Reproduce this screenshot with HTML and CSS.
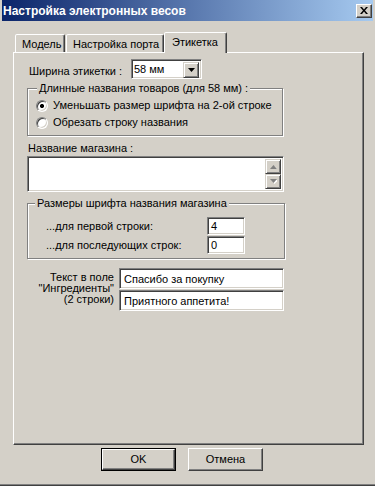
FILE: index.html
```html
<!DOCTYPE html>
<html lang="ru">
<head>
<meta charset="utf-8">
<title>Настройка электронных весов</title>
<link rel="stylesheet" href="styles.css">
</head>
<body>
<div class="window">
  <div class="titlebar">
    <span class="title">Настройка электронных весов</span>
    <span class="close"><svg width="8" height="7" viewBox="0 0 8 7"><path d="M0 0h2l2 2.5L6 0h2L5 3.5 8 7H6L4 4.5 2 7H0l3-3.5z" fill="#000"/></svg></span>
  </div>
  <div class="tabs">
    <div class="tab t1">Модель</div>
    <div class="tab t2">Настройка порта</div>
    <div class="tab t3 active">Этикетка</div>
  </div>
  <div class="panel">
    <div class="width-row">
      <span class="width-lbl">Ширина этикетки :</span>
      <div class="combo">
        <span class="combo-val">58 мм</span>
        <span class="combo-btn"><svg width="7" height="4" viewBox="0 0 7 4"><path d="M0 0h7L3.5 4z" fill="#000"/></svg></span>
      </div>
    </div>
    <div class="group g1">
      <span class="legend">Длинные названия товаров (для 58 мм) :</span>
      <div class="radio-row"><span class="radio checked"></span><span>Уменьшать размер шрифта на 2-ой строке</span></div>
      <div class="radio-row"><span class="radio"></span><span>Обрезать строку названия</span></div>
    </div>
    <div class="shop-lbl">Название магазина :</div>
    <div class="memo">
      <div class="memo-text"></div>
      <div class="vscroll">
        <span class="sbtn"><svg width="7" height="4" viewBox="0 0 7 4"><path d="M1 4.5h7L4.5 1z" fill="#fff"/><path d="M0 4h7L3.5 0z" fill="#808080"/></svg></span>
        <span class="sbtn"><svg width="7" height="5" viewBox="0 0 7 5"><path d="M1 1h7L4.5 5z" fill="#fff"/><path d="M0 0h7L3.5 4z" fill="#808080"/></svg></span>
      </div>
    </div>
    <div class="group g2">
      <span class="legend">Размеры шрифта названия магазина</span>
      <div class="frow"><span class="flbl">...для первой строки:</span><span class="field small">4</span></div>
      <div class="frow"><span class="flbl">...для последующих строк:</span><span class="field small">0</span></div>
    </div>
    <div class="ingr">
      <div class="ingr-lbl">Текст в поле<br>"Ингредиенты"<br>(2 строки)</div>
      <div class="ingr-fields">
        <div class="field wide">Спасибо за покупку</div>
        <div class="field wide">Приятного аппетита!</div>
      </div>
    </div>
  </div>
  <div class="buttons">
    <span class="btn default"><span class="btn-in">OK</span></span>
    <span class="btn"><span class="btn-in">Отмена</span></span>
  </div>
</div>
</body>
</html>
```
FILE: styles.css
```css
* { box-sizing: border-box; }
body {
  margin: 0;
  background: #d4d0c8;
  font-family: "Liberation Sans", Arial, sans-serif;
  font-size: 11px;
  color: #000;
}
.window {
  width: 375px;
  height: 486px;
  display: flex;
  flex-direction: column;
  background: #d4d0c8;
  border-bottom: 1px solid #404040;
  box-shadow: inset 0 -1px 0 #808080;
}
.titlebar {
  height: 21px;
  margin: 0 2px;
  padding: 0 1px 0 1px;
  display: flex;
  align-items: center;
  justify-content: space-between;
  background: linear-gradient(90deg, #0a246a, #a6caf0);
}
.title {
  color: #fff;
  font-weight: bold;
  font-size: 12px;
  line-height: 14px;
  padding-top: 1px;
}
.close {
  width: 16px;
  height: 14px;
  display: flex;
  align-items: center;
  justify-content: center;
  background: #d4d0c8;
  border: 1px solid;
  border-color: #fff #404040 #404040 #fff;
  box-shadow: inset -1px -1px 0 #808080;
}
.tabs {
  margin-top: 11px;
  height: 20px;
  padding-left: 15px;
  display: flex;
  align-items: flex-end;
}
.tab {
  height: 18px;
  border: 1px solid;
  border-bottom: 0;
  border-color: #fff #404040 transparent #fff;
  border-radius: 2px 2px 0 0;
  box-shadow: inset -1px 0 0 #808080;
  background: #d4d0c8;
  padding: 3px 0 0 6px;
  line-height: 13px;
  white-space: nowrap;
}
.t1 { width: 50px; margin-right: 1px; }
.t2 { width: 98px; }
.t3 { width: 63px; }
.tab.active {
  height: 21px;
  margin-bottom: -1px;
  position: relative;
  z-index: 1;
  padding-top: 3px;
  padding-left: 7px;
}
.panel {
  margin-left: 13px;
  width: 351px;
  height: 393px;
  border: 1px solid;
  border-color: #fff #404040 #404040 #fff;
  box-shadow: inset -1px -1px 0 #808080;
  padding-left: 13px;
  display: flex;
  flex-direction: column;
  align-items: flex-start;
}
.width-row {
  margin-top: 6px;
  height: 20px;
  display: flex;
}
.width-lbl {
  width: 104px;
  padding-left: 2px;
  padding-top: 6px;
  line-height: 13px;
}
.combo {
  width: 71px;
  height: 20px;
  display: flex;
  justify-content: space-between;
  background: #fff;
  border: 1px solid;
  border-color: #808080 #fff #fff #808080;
  box-shadow: inset 1px 1px 0 #404040, inset -1px -1px 0 #d4d0c8;
  padding: 2px;
}
.combo-val {
  line-height: 14px;
}
.combo-btn {
  width: 16px;
  height: 16px;
  display: flex;
  align-items: center;
  justify-content: center;
  background: #d4d0c8;
  border: 1px solid;
  border-color: #d4d0c8 #404040 #404040 #d4d0c8;
  box-shadow: inset 1px 1px 0 #fff, inset -1px -1px 0 #808080;
}
.group {
  position: relative;
  border: 1px solid #808080;
  box-shadow: 1px 1px 0 #fff, inset 1px 1px 0 #fff;
}
.legend {
  position: absolute;
  top: -7px;
  left: 9px;
  padding: 0 2px;
  background: #d4d0c8;
  line-height: 13px;
  white-space: nowrap;
}
.g1 {
  margin-top: 9px;
  width: 256px;
  padding: 8px 0 4px 8px;
}
.g2 .legend { left: 7px; }
.radio-row {
  height: 17px;
  display: flex;
  align-items: center;
  gap: 5px;
  line-height: 13px;
}
.radio {
  width: 12px;
  height: 12px;
  border-radius: 50%;
  border: 1px solid;
  border-color: #808080 #fff #fff #808080;
  box-shadow: inset 1px 1px 0 #404040, inset -1px -1px 0 #d4d0c8;
  background: #fff;
}
.radio.checked {
  background: radial-gradient(circle, #000 0, #000 1.8px, #fff 2.3px);
}
.shop-lbl {
  margin-top: 6px;
  padding-left: 1px;
  line-height: 13px;
}
.memo {
  margin-top: 1px;
  width: 257px;
  height: 36px;
  display: flex;
  background: #fff;
  border: 1px solid;
  border-color: #808080 #fff #fff #808080;
  box-shadow: inset 1px 1px 0 #404040, inset -1px -1px 0 #d4d0c8;
  padding: 2px;
}
.memo-text { flex: 1; }
.vscroll {
  width: 16px;
  display: flex;
  flex-direction: column;
}
.sbtn {
  height: 16px;
  display: flex;
  align-items: center;
  justify-content: center;
  background: #d4d0c8;
  border: 1px solid;
  border-color: #d4d0c8 #404040 #404040 #d4d0c8;
  box-shadow: inset 1px 1px 0 #fff, inset -1px -1px 0 #808080;
}
.g2 {
  margin-top: 11px;
  width: 258px;
  padding: 13px 0 4px 18px;
  display: flex;
  flex-direction: column;
  gap: 1px;
}
.frow {
  height: 18px;
  display: flex;
  align-items: center;
}
.flbl {
  width: 161px;
  line-height: 13px;
}
.field {
  background: #fff;
  border: 1px solid;
  border-color: #808080 #fff #fff #808080;
  box-shadow: inset 1px 1px 0 #404040, inset -1px -1px 0 #d4d0c8;
  line-height: 14px;
  white-space: nowrap;
}
.field.small {
  width: 38px;
  height: 18px;
  padding: 1px 0 0 3px;
}
.ingr {
  margin-top: 9px;
  display: flex;
  gap: 5px;
}
.ingr-lbl {
  width: 87px;
  text-align: right;
  line-height: 11px;
  padding-top: 4px;
}
.ingr-fields {
  display: flex;
  flex-direction: column;
  gap: 1px;
}
.field.wide {
  width: 165px;
  height: 21px;
  padding: 3px 0 0 4px;
}
.buttons {
  margin-top: 3px;
  padding-left: 101px;
  display: flex;
  gap: 12px;
}
.btn {
  width: 75px;
  height: 23px;
  display: flex;
  border: 1px solid;
  border-color: #fff #404040 #404040 #fff;
  box-shadow: inset -1px -1px 0 #808080;
}
.btn-in {
  flex: 1;
  display: flex;
  align-items: center;
  justify-content: center;
  line-height: 13px;
}
.btn.default {
  border: 1px solid #000;
  box-shadow: none;
}
.btn.default .btn-in {
  border: 1px solid;
  border-color: #fff #404040 #404040 #fff;
  box-shadow: inset -1px -1px 0 #808080;
}
```
